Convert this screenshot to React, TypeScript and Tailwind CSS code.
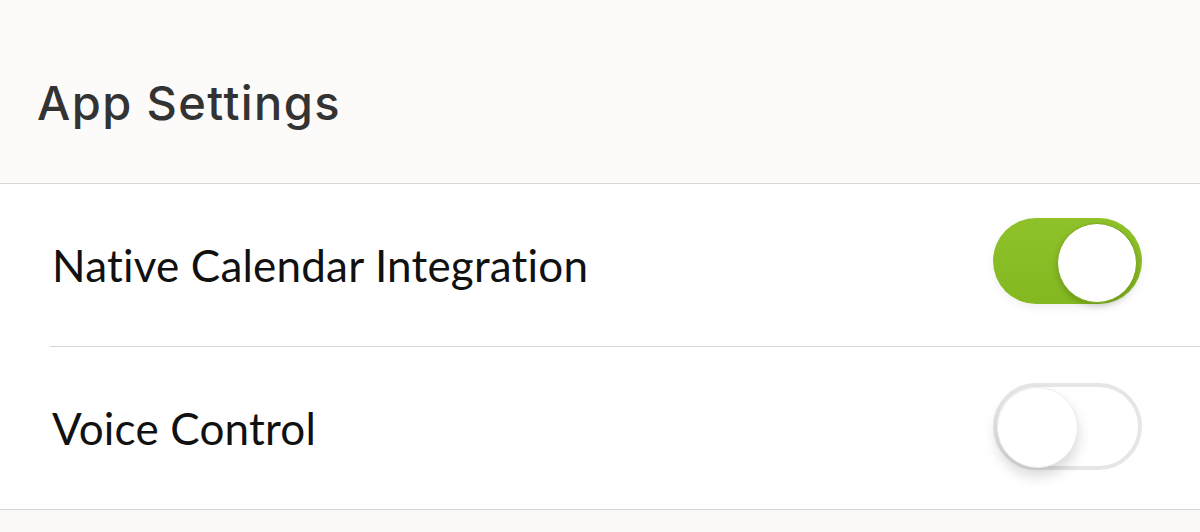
const rows = [
  { label: "Native Calendar Integration", on: true },
  { label: "Voice Control", on: false },
];

function Toggle({ on }: { on: boolean }) {
  if (on) {
    return (
      <div className="relative w-[149px] h-[86px] rounded-full bg-gradient-to-b from-[#8fc22a] to-[#84b820] -mt-[9px] shadow-[0_4px_10px_rgba(0,0,0,0.06)]">
        <div className="absolute right-[5px] top-[5px] w-[80px] h-[80px] rounded-full bg-white border border-[#7aa81c] shadow-[0_3px_6px_rgba(0,0,0,0.18)]" />
      </div>
    );
  }
  return (
    <div className="relative w-[149px] h-[87px] rounded-full bg-white border-[4px] border-[#e6e6e6] -mt-[3px]">
      <div className="absolute left-0 top-0 w-[81px] h-[81px] rounded-full bg-white border border-[#ececec] shadow-[0_8px_14px_rgba(0,0,0,0.16)]" />
    </div>
  );
}

export default function App() {
  return (
    <div className="w-[1200px] h-[532px] bg-[#faf9f8] overflow-hidden" style={{ fontFamily: "Lato, sans-serif" }}>
      {/* header */}
      <div className="h-[184px] bg-[#fcfbfa] border-b border-[#d6d6d6] pl-[37px] pt-[75px]">
        <h1 className="text-[47px] leading-[56px] text-[#333333] tracking-[1.4px] font-medium" style={{ fontFamily: "Inter, sans-serif" }}>
          App Settings
        </h1>
      </div>
      <div className="bg-white border-b border-[#d6d6d6]">
        {rows.map((r, i) => (
          <div
            key={r.label}
            className={`ml-[50px] flex items-center justify-between pl-[2px] pr-[58px] ${i === 0 ? "h-[163px] border-b border-[#d6d6d6]" : "h-[162px]"}`}
          >
            <span className="text-[44px] text-[#111111] tracking-[0.2px]">{r.label}</span>
            <Toggle on={r.on} />
          </div>
        ))}
      </div>
    </div>
  );
}
